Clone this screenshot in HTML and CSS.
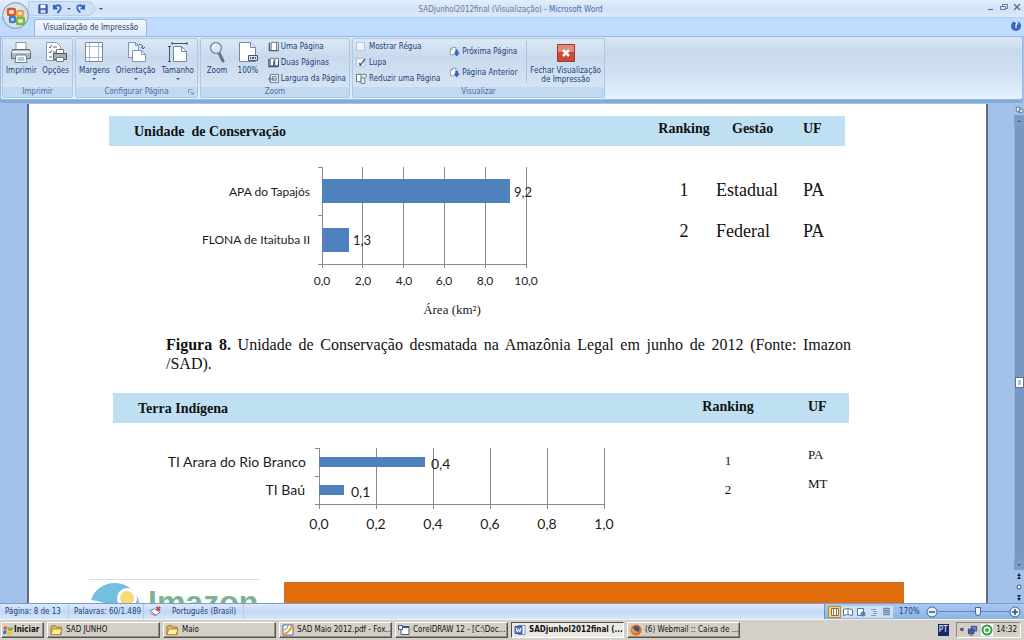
FILE: index.html
```html
<!DOCTYPE html>
<html lang="pt-BR">
<head>
<meta charset="utf-8">
<title>SADjunhol2012final (Visualização) - Microsoft Word</title>
<link rel="stylesheet" href="styles.css">
</head>
<body>
<svg class="defs" aria-hidden="true">
  <symbol id="i-page" viewBox="0 0 12 12"><path d="M3.500 1.500h8v9h-8z" fill="#fff" stroke="#5f7594"/><path d="M9.500 2v8" stroke="#3f5578"/><path d="M1.500 2v8.500h10" fill="none" stroke="#4e6486" stroke-width="1.500"/></symbol>
  <symbol id="i-pages" viewBox="0 0 12 12"><path d="M2.500 1.500h4v8h-4zM7.500 1.500h4v8h-4z" fill="#fff" stroke="#5f7594"/><path d="M1 2v8.500h10.500M6.500 5v5M11.500 4v6" fill="none" stroke="#3f5578" stroke-width="1.500"/></symbol>
  <symbol id="i-go" viewBox="0 0 12 12"><path d="M1.500 3.500l2-2h4v8h-6z" fill="#fff" stroke="#8396b5"/><path d="M1.500 3.500h2v-2" fill="none" stroke="#8396b5"/><path d="M7 4h3v3h2l-3.500 4.500L5 7h2z" fill="#3565c4"/></symbol>
  <symbol id="i-folder" viewBox="0 0 14 12"><path d="M1 3l1-1.500h4L7 3h5v8H1z" fill="#e8bd45" stroke="#937025"/><path d="M3 5h10l-2 6H1z" fill="#fff0a0" stroke="#ab8635"/></symbol>
</svg>

<header class="titlebar">
  <div class="left">
    <div class="quick">
      <button class="tool" aria-label="Salvar"><svg viewBox="0 0 12 12" width="10" height="10"><path d="M1 1h10v10H1z" fill="#4361b8" stroke="#253f8c"/><path d="M3 1h6v4H3z" fill="#fff"/><path d="M3 7h6v4H3z" fill="#c8d5f2"/></svg></button>
      <button class="tool" aria-label="Desfazer"><svg viewBox="0 0 12 12" width="11" height="11"><path d="M2 2v4h4M2.500 5.500C5 1 10 2 9.500 5.500S7 9 6 11" fill="none" stroke="#3567c0" stroke-width="2"/></svg></button>
      <span class="caret"></span>
      <button class="tool" aria-label="Refazer"><svg viewBox="0 0 12 12" width="11" height="11"><path d="M10 2v4H6M9.500 5.500C7 1 2 2 2.500 5.500S4 9 6 10" fill="none" stroke="#3567c0" stroke-width="2"/></svg></button>
    </div>
    <span class="more"></span>
  </div>
  <h1 class="title"><span class="doc">SADjunhol2012final (Visualização)</span> - Microsoft Word</h1>
  <div class="window-buttons">
    <button class="tool" aria-label="Minimizar"><svg viewBox="0 0 8 8" width="8" height="8"><path d="M1 6.500h5" stroke="#50698f"/></svg></button>
    <button class="tool" aria-label="Restaurar"><svg viewBox="0 0 8 8" width="8" height="8"><path d="M2.500 3V1.500h5v4H6M.5 3.500h5v3h-5z" fill="none" stroke="#667b9c"/></svg></button>
    <button class="tool" aria-label="Fechar"><svg viewBox="0 0 8 8" width="8" height="8"><path d="M1 1l6 6M7 1L1 7" stroke="#596f91" stroke-width="1.300"/></svg></button>
  </div>
</header>
<button class="office" aria-label="Botão Office"><svg viewBox="0 0 20 20" width="20" height="20"><g fill="none" stroke-width="2.400"><rect x="2" y="3" width="7" height="6" rx="1" stroke="#e0561f"/><rect x="11" y="5" width="6" height="5" rx="1" stroke="#f3a33a"/><rect x="4" y="11" width="5" height="5" rx="1" stroke="#3c78cc"/><rect x="11" y="12" width="7" height="6" rx="1" stroke="#7eb63b"/></g></svg></button>

<nav class="tabs">
  <button class="tab">Visualização de Impressão</button>
  <button class="help" aria-label="Ajuda">?</button>
</nav>

<div class="ribbon">
  <section class="group g-print">
    <div class="tools">
      <button class="big"><svg viewBox="0 0 22 22" width="22" height="22"><path d="M6 1.500h10V9H6z" fill="#fff" stroke="#8a95a5"/><path d="M2.500 8.500h17l1 3v6h-19v-6z" fill="#b4b8be" stroke="#62686f"/><path d="M2 10h18v2H2z" fill="#e9ebee"/><path d="M6 14h10l1 7.500H5z" fill="#fff" stroke="#6d7f99"/><path d="M8 17h6M7.500 19h7" stroke="#5490cd"/></svg>Imprimir</button>
      <button class="big"><svg viewBox="0 0 22 22" width="22" height="22"><path d="M1.500 1.500h10l4 4v14h-14z" fill="#fff" stroke="#8a99b0"/><path d="M4 6l1 1 2-3M8 6h4M4 11l1 1 2-3M8 11h4M4 16h3" fill="none" stroke="#55657f"/><path d="M11.500 8.500h7v5h-7z" fill="#fff" stroke="#777"/><path d="M8.500 12.500h13v6h-13z" fill="#a9adb3" stroke="#53585f"/><path d="M11.500 16.500h7v4h-7z" fill="#fff" stroke="#6d7f99"/></svg>Opções</button>
    </div>
    <h2 class="group-name">Imprimir</h2>
  </section>
  <section class="group g-setup">
    <div class="tools">
      <button class="big"><svg viewBox="0 0 22 22" width="22" height="22"><path d="M2.500 1.500h17v19h-17z" fill="#fff" stroke="#7588a5"/><path d="M6.500 2v18M15.500 2v18M3 5.500h16M3 16.500h16" stroke="#a9b7cc"/></svg>Margens<span class="caret"></span></button>
      <button class="big"><svg viewBox="0 0 22 22" width="22" height="22"><path d="M3.500 1.500h7l3 3v12h-10z" fill="#eef3fa" stroke="#8194b1"/><path d="M7.500 9.500h9l4 4v7h-13z" fill="#fff" stroke="#8194b1"/><path d="M10.500 1.500v3h3M16.500 9.500v4h4" fill="none" stroke="#8194b1"/><path d="M14 3q4 0 4 4m-2-1l2 2 2-2" fill="none" stroke="#4669a5"/></svg>Orientação<span class="caret"></span></button>
      <button class="big"><svg viewBox="0 0 22 22" width="22" height="22"><path d="M6.500 5.500h8l5 5v10h-13z" fill="#fff" stroke="#7588a5"/><path d="M14.500 5.500v5h5" fill="none" stroke="#7588a5"/><path d="M5 2.500h15M5 1v3M20 1v3M2.500 5v16M1 5.500h3M1 20.500h3" stroke="#46556b"/></svg>Tamanho<span class="caret"></span></button>
    </div>
    <h2 class="group-name">Configurar Página<svg class="launch" viewBox="0 0 8 8" width="6" height="6"><path d="M.5 6V.5H6M3 3l4 4M7 4v3H4" fill="none" stroke="#6687b5"/></svg></h2>
  </section>
  <section class="group g-zoom">
    <div class="tools">
      <button class="big"><svg viewBox="0 0 22 22" width="22" height="22"><path d="M13 12l4 8" stroke="#65758c" stroke-width="3" stroke-linecap="round"/><circle cx="10" cy="7" r="5.500" fill="#d8e8fa" stroke="#8493aa" stroke-width="1.500"/><path d="M7 7q0-3 3-3" fill="none" stroke="#fff" stroke-width="1.500"/></svg>Zoom</button>
      <button class="big"><svg viewBox="0 0 22 22" width="22" height="22"><path d="M2.500 1.500h11l5 5v14h-16z" fill="#fff" stroke="#7588a5"/><path d="M13.500 1.500v5h5" fill="#e5ecf6" stroke="#7588a5"/><path d="M11.500 14.500h9v5h-9z" fill="#dfe4ec" stroke="#46556b"/><path d="M13.500 16v2M15.500 16v2M16.500 16v2M18.500 16v2" stroke="#46556b"/></svg>100%</button>
      <div class="stack">
        <button class="small"><svg width="11" height="11"><use href="#i-page"/></svg>Uma Página</button>
        <button class="small"><svg width="11" height="11"><use href="#i-pages"/></svg>Duas Páginas</button>
        <button class="small"><svg viewBox="0 0 12 12" width="11" height="11"><path d="M2.500 1.500h9v9h-9z" fill="#eee" stroke="#66758c"/><path d="M0 6.500h8M2 4v5M5 4h4v4H5z" fill="none" stroke="#66758c"/></svg>Largura da Página</button>
      </div>
    </div>
    <h2 class="group-name">Zoom</h2>
  </section>
  <section class="group g-view">
    <div class="tools">
      <div class="stack">
        <label class="small"><input type="checkbox" class="check">Mostrar Régua</label>
        <label class="small"><input type="checkbox" class="check" checked>Lupa</label>
        <button class="small"><svg viewBox="0 0 12 12" width="11" height="11"><path d="M.5 1.500h5v8h-5z" fill="#fff" stroke="#587458"/><path d="M6 1.500h5v4M5.500 5.500h4v6h-4z" fill="#edf3fb" stroke="#66758c"/></svg>Reduzir uma Página</button>
      </div>
      <div class="stack two">
        <button class="small"><svg width="11" height="11"><use href="#i-go"/></svg>Próxima Página</button>
        <button class="small"><svg width="11" height="11"><use href="#i-go"/></svg>Página Anterior</button>
      </div>
      <button class="big close"><svg viewBox="0 0 22 22" width="22" height="22"><path d="M2.500 3.500h17v17h-17z" fill="#cf4834" stroke="#9d3a2e"/><path d="M3 4h16v7H3z" fill="#e18a78"/><path d="M8 9l6 6M14 9l-6 6" stroke="#fff" stroke-width="2.500"/></svg>Fechar Visualização<br>de Impressão</button>
    </div>
    <h2 class="group-name">Visualizar</h2>
  </section>
</div>

<div class="workspace">
  <main class="page">
    <table class="data conservation">
      <colgroup><col><col class="c-rank"><col class="c-mgmt"><col class="c-uf"></colgroup>
      <thead><tr><th class="name">Unidade&nbsp; de Conservação</th><th class="rank">Ranking</th><th class="mgmt">Gestão</th><th class="uf">UF</th></tr></thead>
      <tbody>
        <tr>
          <td rowspan="2" class="plot">
            <svg class="chart" width="440" height="176" role="img" aria-label="Área por unidade de conservação">
              <g class="grid"><path d="M253.500 21v101M294.500 21v101M335.500 21v101M376.500 21v101M417.500 21v101M213.500 21v101M209 21.500h4M209 69.500h4M209 118.500h208"/></g>
              <rect class="bar" x="213" y="33" width="188" height="24"/><rect class="bar" x="213" y="82" width="27" height="24"/>
              <g class="end"><text x="201" y="50">APA do Tapajós</text><text x="201" y="98">FLONA de Itaituba II</text></g>
              <g class="value"><text x="405" y="51">9,2</text><text x="244" y="99">1,3</text></g>
              <g class="mid"><text x="213" y="139">0,0</text><text x="254" y="139">2,0</text><text x="295" y="139">4,0</text><text x="335" y="139">6,0</text><text x="376" y="139">8,0</text><text x="417" y="139">10,0</text></g>
              <text class="axis-name" x="343" y="168">Área (km²)</text>
            </svg>
          </td>
          <td class="rank">1</td><td>Estadual</td><td>PA</td>
        </tr>
        <tr><td class="rank">2</td><td>Federal</td><td>PA</td></tr>
      </tbody>
    </table>

    <p class="caption"><b>Figura 8.</b> Unidade de Conservação desmatada na Amazônia Legal em junho de 2012 (Fonte: Imazon /SAD).</p>

    <table class="data indigenous">
      <colgroup><col><col class="c-rank"><col class="c-uf"></colgroup>
      <thead><tr><th class="name">Terra Indígena</th><th class="rank">Ranking</th><th class="uf">UF</th></tr></thead>
      <tbody>
        <tr>
          <td rowspan="2" class="plot">
            <svg class="chart large" width="520" height="112" role="img" aria-label="Área por terra indígena">
              <g class="grid"><path d="M263.500 25v61M320.500 25v61M377.500 25v61M434.500 25v61M491.500 25v61M206.500 25v61M202 25.500h4M202 53.500h4M202 81.500h289"/></g>
              <rect class="bar" x="206" y="34" width="106" height="10"/><rect class="bar" x="206" y="62" width="25" height="10"/>
              <g class="end"><text x="193" y="44">TI Arara do Rio Branco</text><text x="192" y="72">TI Baú</text></g>
              <g class="value"><text x="318" y="46">0,4</text><text x="238" y="74">0,1</text></g>
              <g class="mid"><text x="206" y="106">0,0</text><text x="263" y="106">0,2</text><text x="320" y="106">0,4</text><text x="377" y="106">0,6</text><text x="434" y="106">0,8</text><text x="491" y="106">1,0</text></g>
            </svg>
          </td>
          <td class="rank">1</td><td class="uf">PA</td>
        </tr>
        <tr><td class="rank">2</td><td class="uf">MT</td></tr>
      </tbody>
    </table>

    <footer class="page-foot">
      <div class="brand">
        <svg viewBox="0 0 54 48" width="54" height="48"><path d="M2 20A25 25 0 0 1 50 22L45 46Q35 25 2 20z" fill="#72bfdf"/><circle cx="38" cy="18" r="10" fill="#fff"/><circle cx="38" cy="18" r="7" fill="#f7dc72"/></svg>
        <span>Imazon</span>
      </div>
      <div class="stripe"></div>
    </footer>
  </main>
  <aside class="scroll">
    <button class="sbtn" aria-label="Régua"><svg viewBox="0 0 10 10" width="9" height="9"><path d="M1.500 2.500h4v5h-4zM4.500 4.500h4v4h-4z" fill="#fff" stroke="#566c90"/></svg></button>
    <button class="sbtn dark" aria-label="Acima"><span class="up"></span></button>
    <div class="track"><div class="thumb"></div></div>
    <button class="sbtn dark" aria-label="Abaixo"><span class="caret"></span></button>
    <button class="sbtn" aria-label="Página anterior"><svg viewBox="0 0 8 8" width="8" height="8"><path d="M2 4l2-3 2 3zM2 7l2-3 2 3z" fill="#182848"/></svg></button>
    <button class="sbtn" aria-label="Selecionar objeto"><svg viewBox="0 0 8 8" width="8" height="8"><circle cx="4" cy="4" r="2" fill="#fff" stroke="#384d70"/></svg></button>
    <button class="sbtn" aria-label="Próxima página"><svg viewBox="0 0 8 8" width="8" height="8"><path d="M2 1h4L4 4zM2 4h4L4 7z" fill="#182848"/></svg></button>
  </aside>
</div>

<div class="status">
  <span class="cell s-page">Página: 8 de 13</span>
  <span class="cell s-words">Palavras: 60/1.489</span>
  <span class="cell s-lang"><svg viewBox="0 0 14 12" width="13" height="11"><path d="M1 5l5-2 6 4-5 3z" fill="#fff" stroke="#6d83ad"/><path d="M8 1l4 4M12 1L8 5" stroke="#d23c30" stroke-width="1.800"/><path d="M2 8q3 3 6 2" fill="none" stroke="#d2564a"/></svg>Português (Brasil)</span>
  <div class="views">
    <div class="modes">
      <button class="mode on" aria-label="Layout de impressão"><svg viewBox="0 0 10 10" width="10" height="10"><path d="M1.500 1.500h7v7h-7zM3.500 2v6M6.500 2v6" fill="#fff" stroke="#8a7546"/></svg></button>
      <button class="mode" aria-label="Leitura"><svg viewBox="0 0 10 10" width="10" height="10"><path d="M.5 2.500l4-1 5 1v6l-5-1-4 1zM5 2v6" fill="#fff" stroke="#5c7298"/></svg></button>
      <button class="mode" aria-label="Web"><svg viewBox="0 0 10 10" width="10" height="10"><path d="M1.500 1.500h6v7h-6z" fill="#fff" stroke="#5c7298"/><circle cx="7" cy="7" r="2.500" fill="#4a89b5"/></svg></button>
      <button class="mode" aria-label="Estrutura"><svg viewBox="0 0 10 10" width="10" height="10"><path d="M2 2.500h5M4 4.500h4M4 6.500h4M2 8.500h5" stroke="#8b9bb5"/></svg></button>
      <button class="mode" aria-label="Rascunho"><svg viewBox="0 0 10 10" width="10" height="10"><path d="M1 1.500h7M1 3.500h7M1 5.500h7M1 7.500h7" stroke="#788aa6" stroke-width="1.500"/></svg></button>
    </div>
    <span class="percent">170%</span>
    <button class="round" aria-label="Menos zoom"><svg viewBox="0 0 12 12" width="12" height="12"><circle cx="6" cy="6" r="5" fill="#e2edfb" stroke="#49658f"/><path d="M3 6h6" stroke="#35517d" stroke-width="1.500"/></svg></button>
    <input class="slider" type="range" min="10" max="410" value="240" aria-label="Zoom">
    <button class="round" aria-label="Mais zoom"><svg viewBox="0 0 12 12" width="12" height="12"><circle cx="6" cy="6" r="5" fill="#e2edfb" stroke="#49658f"/><path d="M3 6h6M6 3v6" stroke="#35517d" stroke-width="1.500"/></svg></button>
  </div>
</div>

<div class="taskbar">
  <button class="start"><svg viewBox="0 0 12 12" width="11" height="11"><path d="M1 2q2-1 4 0L4 5Q3 4 .5 5z" fill="#e25a2a"/><path d="M6 2.500q2 1 5 0L10 6q-3 1-5-.5z" fill="#79b33a"/><path d="M.5 6q2-1 3.500 0L3 10q-1-1-3 0z" fill="#3d72cc"/><path d="M5 6.500q2 1 5 .5l-1 4q-3 1-5-.5z" fill="#f1c132"/></svg>Iniciar</button>
  <button class="task"><svg viewBox="0 0 14 12" width="13" height="12"><use href="#i-folder"/></svg><span>SAD JUNHO</span></button>
  <button class="task"><svg viewBox="0 0 14 12" width="13" height="12"><use href="#i-folder"/></svg><span>Maio</span></button>
  <button class="task"><svg viewBox="0 0 12 12" width="12" height="12"><path d="M1 1h10v10H1z" fill="#fff" stroke="#53688f"/><path d="M2 10q5-1 8-8" fill="none" stroke="#e7a32b" stroke-width="2"/><path d="M2 6q3 0 4-4" fill="none" stroke="#6b88b5"/></svg><span>SAD Maio 2012.pdf - Fox...</span></button>
  <button class="task"><svg viewBox="0 0 12 12" width="12" height="12"><path d="M3 2.500h8v8H3z" fill="#fff" stroke="#45597f"/><path d="M3 2h8v2H3z" fill="#3a5288"/><path d="M.5 1.500h4v4h-4z" fill="#e9eef8" stroke="#45597f"/></svg><span>CorelDRAW 12 - [C:\Doc...</span></button>
  <button class="task on"><svg viewBox="0 0 12 12" width="12" height="12"><path d="M4 1.500h7v9H4z" fill="#fff" stroke="#7189b5"/><path d="M1 2.500h7v7H1z" fill="#5b80c8" stroke="#34569c"/><path d="M2 4l1.300 4L4.500 5 5.700 8 7 4" fill="none" stroke="#fff"/></svg><span>SADjunhol2012final (...</span></button>
  <button class="task"><svg viewBox="0 0 12 12" width="12" height="12"><circle cx="6" cy="6" r="5.500" fill="#e0701b"/><circle cx="6.500" cy="5" r="3" fill="#35548f"/><path d="M1 2q0 3 3 3 1 3 4 2-1 3-4 2Q1 8 1 2z" fill="#f39a2d"/></svg><span>(6) Webmail :: Caixa de ...</span></button>
  <span class="lang">PT</span>
  <div class="tray">
    <span class="expand">«</span>
    <svg viewBox="0 0 12 12" width="11" height="11"><path d="M4.500 1.500h6v5h-6z" fill="#7182d8" stroke="#34417f"/><path d="M1.500 4.500h6v5h-6z" fill="#4659b5" stroke="#34417f"/><path d="M3 11h4" stroke="#555"/></svg>
    <svg viewBox="0 0 12 12" width="12" height="12"><path d="M0 0h12v12H0z" fill="#fff"/><circle cx="6" cy="6" r="4.500" fill="#fff" stroke="#2d9b4b" stroke-width="2"/><circle cx="6" cy="6" r="2" fill="#48ae38"/></svg>
    <time>14:32</time>
  </div>
</div>
</body>
</html>
```

FILE: styles.css
```css
* { box-sizing: border-box; }

body {
  margin: 0;
  height: 100vh;
  display: flex;
  flex-direction: column;
  overflow: hidden;
  background: #a3c1e9;
  color: #1d3f78;
  font: 8px/10px "DejaVu Sans Condensed", "DejaVu Sans", sans-serif;
}

button {
  margin: 0;
  padding: 0;
  border: 0;
  background: none;
  color: inherit;
  font: inherit;
}

h1, h2, p { margin: 0; font: inherit; }
svg { display: block; flex: none; }
.defs { position: absolute; width: 0; height: 0; }

.caret, .more {
  border: 2px solid transparent;
  border-top-color: #3d5a8a;
  border-bottom: 0;
}

/* Title bar */
.titlebar {
  display: grid;
  grid-template-columns: 1fr auto 1fr;
  align-items: center;
  height: 18px;
  padding-right: 3px;
  background: linear-gradient(#e4eefc, #d3e3f8 50%, #dbe9fb);
  border-bottom: 1px solid #b5cdee;
}
.left { display: flex; align-items: center; gap: 4px; }
.quick {
  display: flex;
  align-items: center;
  gap: 4px;
  height: 15px;
  margin-left: 28px;
  padding: 0 8px 0 9px;
  border: 1px solid #b6cdec;
  border-radius: 0 8px 8px 0;
  background: #d0e1f7;
}
.title { padding-top: 3px; color: #4c6da5; }
.doc { color: #6f7c8e; }
.window-buttons { display: flex; justify-content: flex-end; gap: 5px; padding-bottom: 4px; }

.office {
  position: absolute;
  left: 2px;
  top: 2px;
  display: grid;
  place-items: center;
  width: 27px;
  height: 27px;
  border: 1px solid #8496b4;
  border-radius: 50%;
  background: radial-gradient(#fff, #d6dfed 60%, #a9bbd6);
}

/* Tabs */
.tabs {
  display: flex;
  justify-content: space-between;
  align-items: flex-end;
  height: 18px;
  padding: 0 3px 0 34px;
  background: #bfdbff;
}
.tab {
  height: 17px;
  padding: 0 8px;
  border: 1px solid #95b6e3;
  border-bottom: 0;
  border-radius: 3px 3px 0 0;
  background: linear-gradient(#f3f8fe, #dce8f7);
}
.help {
  width: 10px;
  height: 10px;
  margin-bottom: 5px;
  border-radius: 50%;
  background: #3767bb;
  color: #fff;
  font-weight: bold;
}

/* Ribbon */
.ribbon {
  display: flex;
  gap: 2px;
  margin: 0 1px 4px 0;
  padding: 1px;
  border: 1px solid #9abae5;
  border-radius: 3px;
  background: linear-gradient(#dbe6f4, #c8d9ed 24%, #d1e1f2 60%, #e3f3fd);
  box-shadow: 0 3px 0 #86aad8;
}
.group {
  display: flex;
  flex-direction: column;
  border: 1px solid #adc7e6;
  border-radius: 2px;
  background: linear-gradient(#dde8f5, #c9daee 30%, #dae8f6);
}
.g-print { width: 71px; }
.g-setup { width: 123px; }
.g-zoom { width: 150px; }
.g-view { width: 253px; }
.tools { display: flex; height: 48px; padding: 2px 3px 0; justify-content: space-between; }
.group-name {
  display: flex;
  justify-content: center;
  position: relative;
  background: #c2d9f1;
  color: #4b6ea5;
}
.launch { position: absolute; right: 3px; top: 2px; }
.big {
  display: flex;
  flex-direction: column;
  align-items: center;
  white-space: nowrap;
}
.big svg { margin-bottom: 3px; }
.big .caret { margin-top: 2px; }
.stack { display: flex; flex-direction: column; gap: 5px; }
.stack.two { gap: 10px; padding-top: 5px; }
.small { display: flex; align-items: center; gap: 2px; height: 11px; white-space: nowrap; }
.g-zoom .tools { padding-left: 5px; }
.close { border-left: 1px solid #a9c1df; padding-left: 3px; margin-bottom: 4px; line-height: 9px; }
.check {
  appearance: none;
  width: 9px;
  height: 9px;
  margin: 0 2px 0 0;
  border: 1px solid #b6c6da;
  background: #eef3fa;
}
.check:checked::before {
  content: "✓";
  display: block;
  color: #33445f;
  line-height: 7px;
}

/* Document */
.workspace { flex: 1; display: flex; min-height: 0; overflow: hidden; }
.page {
  flex: 1;
  display: flex;
  flex-direction: column;
  margin: 0 26px 0 27px;
  padding: 12px 0 0 60px;
  border: solid #5e6c84;
  border-width: 0 2px;
  background: #fff;
  color: #111;
  font-family: "Liberation Serif", serif;
}
.data {
  table-layout: fixed;
  border-collapse: collapse;
  font-size: 18px;
  line-height: 20px;
  flex: none;
}
.data th, .data td { padding: 0; text-align: left; vertical-align: top; }
.data thead { background: #bfdff3; }
.data th { height: 30px; padding-top: 4px; font-size: 14px; line-height: 18px; }
.data th.name { padding: 7px 0 0 25px; }
.data .rank { text-align: center; }
.conservation { width: calc(100% - 161px); margin-left: 20px; }
.conservation .c-rank { width: 64px; }
.conservation .c-mgmt { width: 87px; }
.conservation .c-uf { width: 42px; }
.conservation tbody tr:first-child td:not(.plot) { padding-top: 34px; height: 75px; }
.conservation th.mgmt { padding-left: 16px; }

.indigenous { width: calc(100% - 161px); margin: 20px 0 0 24px; font-size: 13px; line-height: 16px; }
.indigenous .c-rank { width: 78px; }
.indigenous .c-uf { width: 82px; }
.indigenous .uf { padding-left: 41px; }
.indigenous th { padding-top: 5px; }
.indigenous tbody tr:first-child td:not(.plot) { padding-top: 24px; height: 53px; }
.indigenous tbody .rank { line-height: 28px; }

.chart { font: 12px Lato, "Open Sans", sans-serif; fill: #1c1c1c; }
.chart .value { font-size: 13px; }
.chart.large, .chart.large .value { font-size: 14px; }
.grid { fill: none; stroke: #8b8b8b; }
.bar { fill: #4f81bd; }
.end { text-anchor: end; }
.mid, .axis-name { text-anchor: middle; }
.axis-name { font: 13px "Liberation Serif", serif; }

.caption {
  margin: 13px 135px 0 77px;
  font-size: 16px;
  line-height: 19px;
  text-align: justify;
}

.page-foot { display: flex; gap: 24px; height: 24px; margin-top: 44px; padding-right: 82px; overflow: hidden; flex: none; }
.brand {
  display: flex;
  flex: none;
  width: 171px;
  border-top: 1px solid #ddd;
}
.brand span {
  margin-left: 5px;
  color: #7db391;
  font: bold 32px/44px "Liberation Sans", sans-serif;
}
.stripe { flex: 1; margin-top: 3px; background: #e26c0a; border: 1px solid #b9713b; border-bottom: 0; }

.scroll { display: flex; flex-direction: column; width: 10px; }
.sbtn { display: grid; place-items: center; height: 11px; }
.dark { background: #7c9cc9; }
.up { border: 2px solid transparent; border-bottom-color: #3d5a8a; border-top: 0; }
.track {
  flex: 1;
  display: flex;
  flex-direction: column;
  padding-top: 251px;
  background: #7898c4;
  border-left: 1px solid #98b5dd;
}
.thumb { height: 11px; border: 1px solid #5e7392; background: #e8eef6; box-shadow: inset 0 0 0 2px #fff, inset 0 0 9px #93a4bd; }

/* Status bar */
.status {
  display: flex;
  align-items: center;
  height: 16px;
  border-top: 1px solid #7c9ccc;
  background: linear-gradient(#dce9fc, #c1d8f6 50%, #d6e6fb);
}
.cell {
  display: flex;
  align-items: center;
  align-self: stretch;
  gap: 10px;
  padding: 0 5px;
  border-right: 1px solid #b3cbed;
  white-space: nowrap;
}
.s-page { width: 69px; }
.s-words { width: 75px; }
.s-lang { width: 100px; }
.views {
  display: flex;
  align-items: center;
  align-self: stretch;
  width: 200px;
  margin-left: auto;
  padding: 0 3px;
  background: linear-gradient(#a9c8f2, #8cb2e6);
  border-left: 1px solid #6f92c4;
}
.modes { display: flex; background: #cfe0f6; }
.mode { display: grid; place-items: center; width: 13px; height: 12px; }
.mode.on { background: #fbd587; outline: 1px solid #b48b3b; outline-offset: -1px; }
.percent { flex: none; padding: 0 6px; }
.slider { appearance: none; flex: 1; min-width: 0; height: 12px; margin: 0; background: linear-gradient(#6488bb, #6488bb) center / 100% 1px no-repeat; }
.slider::-webkit-slider-thumb {
  appearance: none;
  width: 6px;
  height: 9px;
  border: 1px solid #49658f;
  border-radius: 0 0 3px 3px;
  background: #edf3fb;
}

/* Taskbar */
.taskbar {
  display: flex;
  align-items: center;
  gap: 3px;
  height: 21px;
  padding: 0 3px 0 1px;
  border-top: 1px solid #f4f2ed;
  background: #d4d0c8;
  color: #111;
}
.start, .task {
  display: flex;
  align-items: center;
  gap: 3px;
  height: 16px;
  padding: 0 2px;
  border: 1px solid;
  border-color: #fff #55524d #55524d #fff;
  box-shadow: inset -1px -1px 0 #96928a;
  white-space: nowrap;
}
.start { flex: none; gap: 0; min-width: 43px; padding: 0 1px; font-weight: bold; }
.task { flex: 0 1 113px; overflow: hidden; }
.task.on { border-color: #55524d #fff #fff #55524d; box-shadow: none; background: #ece9e4; font-weight: bold; }
.lang {
  margin-left: auto;
  padding: 1px;
  background: #16286e;
  color: #fff;
}
.tray {
  display: flex;
  align-items: center;
  gap: 3px;
  height: 16px;
  margin-left: 4px;
  padding: 0 3px;
  border: 1px solid;
  border-color: #8b877f #fff #fff #8b877f;
}
.expand { font-weight: bold; }
```
